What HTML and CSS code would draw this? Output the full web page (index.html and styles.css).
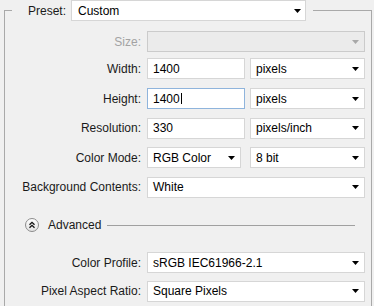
FILE: index.html
```html
<!DOCTYPE html>
<html lang="en">
<head>
    <meta charset="UTF-8" />
    <title>New Document</title>
    <link rel="stylesheet" href="styles.css">
</head>
<body>
    <fieldset class="panel">
        <legend class="preset">
            <span class="label preset-label">Preset:</span>
            <div class="box w-preset">
                <span class="value">Custom</span>
                <svg class="arrow" width="7" height="4" viewBox="0 0 7 4"><polygon points="0,0 7,0 3.5,4" /></svg>
            </div>
        </legend>

        <div class="rows">
            <div class="row row-size">
                <span class="label muted">Size:</span>
                <div class="fields">
                    <div class="box w-full disabled">
                        <span class="value"></span>
                        <svg class="arrow" width="7" height="4" viewBox="0 0 7 4"><polygon points="0,0 7,0 3.5,4" /></svg>
                    </div>
                </div>
            </div>
            <div class="row">
                <span class="label">Width:</span>
                <div class="fields">
                    <div class="box w-input"><span class="value">1400</span></div>
                    <div class="box w-unit">
                        <span class="value">pixels</span>
                        <svg class="arrow" width="7" height="4" viewBox="0 0 7 4"><polygon points="0,0 7,0 3.5,4" /></svg>
                    </div>
                </div>
            </div>
            <div class="row">
                <span class="label">Height:</span>
                <div class="fields">
                    <div class="box w-input focused"><span class="value">1400</span><span class="caret"></span></div>
                    <div class="box w-unit">
                        <span class="value">pixels</span>
                        <svg class="arrow" width="7" height="4" viewBox="0 0 7 4"><polygon points="0,0 7,0 3.5,4" /></svg>
                    </div>
                </div>
            </div>
            <div class="row">
                <span class="label">Resolution:</span>
                <div class="fields">
                    <div class="box w-input"><span class="value">330</span></div>
                    <div class="box w-unit">
                        <span class="value">pixels/inch</span>
                        <svg class="arrow" width="7" height="4" viewBox="0 0 7 4"><polygon points="0,0 7,0 3.5,4" /></svg>
                    </div>
                </div>
            </div>
            <div class="row">
                <span class="label">Color Mode:</span>
                <div class="fields">
                    <div class="box w-mode">
                        <span class="value">RGB Color</span>
                        <svg class="arrow" width="7" height="4" viewBox="0 0 7 4"><polygon points="0,0 7,0 3.5,4" /></svg>
                    </div>
                    <div class="box w-unit">
                        <span class="value">8 bit</span>
                        <svg class="arrow" width="7" height="4" viewBox="0 0 7 4"><polygon points="0,0 7,0 3.5,4" /></svg>
                    </div>
                </div>
            </div>
            <div class="row">
                <span class="label">Background Contents:</span>
                <div class="fields">
                    <div class="box w-full">
                        <span class="value">White</span>
                        <svg class="arrow" width="7" height="4" viewBox="0 0 7 4"><polygon points="0,0 7,0 3.5,4" /></svg>
                    </div>
                </div>
            </div>
        </div>

        <div class="advanced">
            <svg class="adv-icon" width="14" height="14" viewBox="0 0 14 14">
                <defs>
                    <linearGradient id="advFill" x1="0" y1="0" x2="0" y2="1">
                        <stop offset="0" stop-color="#ffffff" />
                        <stop offset="1" stop-color="#e2e2e2" />
                    </linearGradient>
                </defs>
                <circle cx="7" cy="7" r="6.5" fill="url(#advFill)" stroke="#8c8c8c" />
                <polyline points="4.5,6.8 7,4.3 9.5,6.8" fill="none" stroke="#111" stroke-width="1.3" />
                <polyline points="4.5,9.8 7,7.3 9.5,9.8" fill="none" stroke="#111" stroke-width="1.3" />
            </svg>
            <span class="adv-text">Advanced</span>
            <span class="adv-line"></span>
        </div>

        <div class="rows rows-adv">
            <div class="row">
                <span class="label">Color Profile:</span>
                <div class="fields">
                    <div class="box w-full">
                        <span class="value">sRGB IEC61966-2.1</span>
                        <svg class="arrow" width="7" height="4" viewBox="0 0 7 4"><polygon points="0,0 7,0 3.5,4" /></svg>
                    </div>
                </div>
            </div>
            <div class="row">
                <span class="label">Pixel Aspect Ratio:</span>
                <div class="fields">
                    <div class="box w-full">
                        <span class="value">Square Pixels</span>
                        <svg class="arrow" width="7" height="4" viewBox="0 0 7 4"><polygon points="0,0 7,0 3.5,4" /></svg>
                    </div>
                </div>
            </div>
        </div>
    </fieldset>
</body>
</html>
```

FILE: styles.css
```css
/* Dasar */
* {
    box-sizing: border-box;
}
body {
    margin: 0;
    background: #f0f0f0;
    color: #1a1a1a;
    font-family: 'Liberation Sans', Arial, sans-serif;
    font-size: 12px;
    overflow: hidden;
    height: 306px;
}

/* Group box, tanpa garis bawah (terpotong di tepi) */
.panel {
    margin: 0 2px 0 4px;
    padding: 0 5px 0 7px;
    border: 1px solid #a9a9a9;
    border-bottom: 0;
    min-width: 0;
    height: 306px;
}
.preset {
    display: flex;
    align-items: center;
    width: 301px;
    padding: 0 7px 0 0;
}
.preset-label {
    width: 54px;
    text-align: right;
    margin-right: 5px;
}

/* Baris form */
.rows {
    display: flex;
    flex-direction: column;
    gap: 8.6px;
    margin-top: 10px;
}
.row {
    display: flex;
    align-items: center;
    height: 21px;
}
.row-size {
    margin-bottom: -2.2px;
}
.label {
    width: 129px;
    text-align: right;
    white-space: nowrap;
}
.label.muted {
    color: #a3a3a3;
}
.preset .label {
    width: 54px;
}
.fields {
    margin-left: 6px;
    width: 218px;
    display: flex;
    justify-content: space-between;
}

/* Kotak input / dropdown */
.box {
    height: 21px;
    display: flex;
    align-items: center;
    background: #fff;
    border: 1px solid #d6d6d6;
    padding: 0 5px 0 5px;
    color: #000;
    white-space: nowrap;
}
.box .value {
    flex: 1;
}
.box .arrow {
    fill: #000;
    flex: none;
}
.box.disabled {
    background: #ebebeb;
    border-color: #cbcbcb;
}
.box.disabled .arrow {
    fill: #a8a8a8;
}
.box.focused {
    border-color: #8fb4dc;
}
.box.focused .value {
    flex: none;
}
.caret {
    width: 1px;
    height: 11px;
    background: #000;
    margin-left: 1px;
}
.w-preset {
    width: 235px;
    padding: 0 4px 0 6px;
}
.w-input {
    width: 98px;
}
.w-unit {
    width: 115px;
}
.w-mode {
    width: 94px;
}
.w-full {
    width: 218px;
}

/* Advanced */
.advanced {
    display: flex;
    align-items: center;
    height: 14px;
    margin-top: 20.6px;
}
.adv-icon {
    margin-left: 13px;
    flex: none;
}
.adv-text {
    margin-left: 9px;
}
.adv-line {
    flex: 1;
    height: 1px;
    background: #a0a0a0;
    margin: 0 11px 0 6px;
}
.rows-adv {
    margin-top: 20px;
    gap: 7.3px;
}
```
